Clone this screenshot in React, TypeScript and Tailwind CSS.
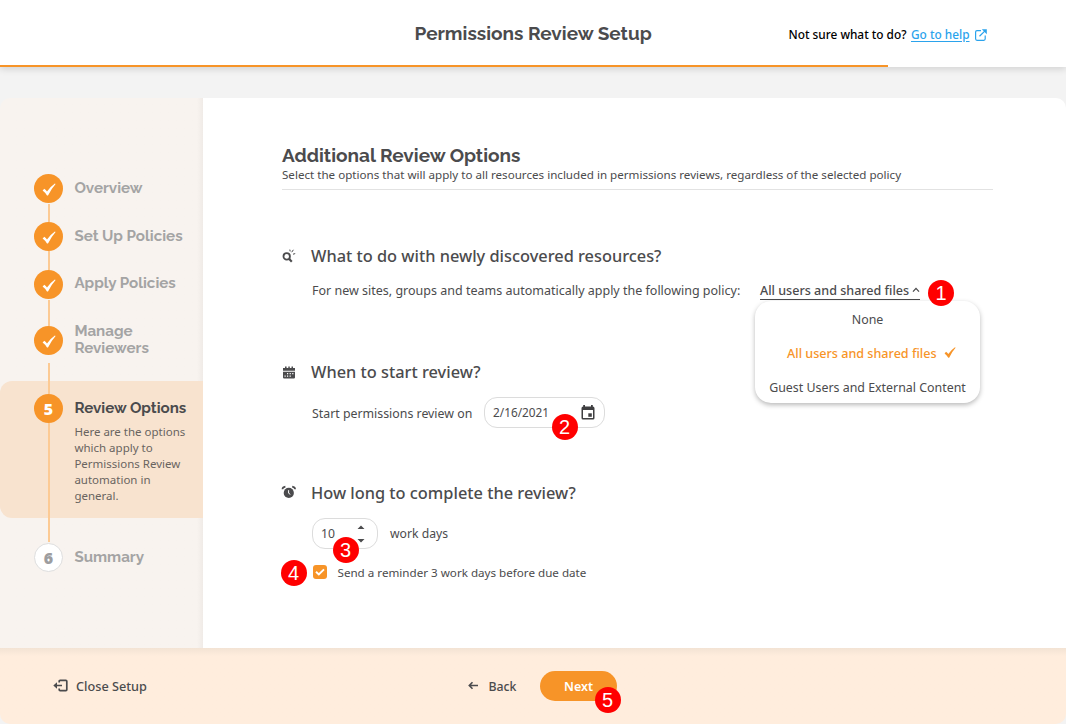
import React from "react";

const Check = ({ className }: { className: string }) => (
  <svg viewBox="0 0 14 13" className={className} fill="currentColor">
    <path d="M0.6 7.6 L2.3 5.7 Q3.9 6.8 5 8.4 Q8.4 3.5 12.9 0.4 L13.6 1 Q9.6 5.4 6 12.6 H5 Q3.3 9.6 0.6 7.6Z" />
  </svg>
);

const Badge = ({ n, className }: { n: number; className: string }) => (
  <span
    className={`absolute z-20 flex h-[26px] w-[26px] items-center justify-center rounded-full bg-[#ff0000] font-['Liberation_Sans',sans-serif] text-[20px] leading-none font-normal text-white ${className}`}
  >
    {n}
  </span>
);

const Dot = () => (
  <span className="flex h-[29px] w-[29px] shrink-0 items-center justify-center rounded-full bg-[#f79428] text-white">
    <Check className="mt-px h-[13px] w-[14px]" />
  </span>
);

const steps = [
  { label: "Overview", height: "h-[48px]", text: "mt-[6px]", line: "mt-px" },
  { label: "Set Up Policies", height: "h-[48px]", text: "mt-[6px]", line: "" },
  { label: "Apply Policies", height: "h-[56px]", text: "mt-[5px]", line: "mt-px" },
  { label: "Manage Reviewers", height: "h-[55px]", text: "-mt-[3px]", line: "mt-[8px]" },
];

function Sidebar() {
  return (
    <nav className="w-[203px] shrink-0 rounded-tl-[10px] bg-gradient-to-r from-[#f8f3ef] from-[97%] to-[#f0ebe7] pt-[76px] font-['Raleway','Inter',sans-serif] text-[15.15px] leading-[17px] font-bold text-[#a4a4a4]">
      {steps.map((s) => (
        <div key={s.label} className={`flex pl-[34px] ${s.height}`}>
          <div className="flex flex-col items-center">
            <Dot />
            <span className={`w-[2px] flex-1 bg-[#fcca94] ${s.line}`} />
          </div>
          <span className={`ml-[11.4px] w-[115px] ${s.text}`}>{s.label}</span>
        </div>
      ))}
      <div className="flex h-[137px] rounded-l-[12px] bg-[#f8e3cf] pl-[34px]">
        <div className="flex flex-col items-center">
          <span className="h-[13px] w-[2px] bg-[#fcca94]" />
          <span className="flex h-[29px] w-[29px] items-center justify-center rounded-full bg-[#f79428] pt-px font-['Noto_Sans',sans-serif] text-[16px] font-black text-white">
            5
          </span>
          <span className="w-[2px] flex-1 bg-[#fcca94]" />
        </div>
        <div className="ml-[11.4px] pt-[19px]">
          <h3 className="text-[#4b4b4d]">Review Options</h3>
          <p className="mt-[7px] w-[118px] font-['Noto_Sans',sans-serif] text-[11.5px] leading-4 font-normal text-[#69645f]">
            Here are the options which apply to Permissions Review automation in general.
          </p>
        </div>
      </div>
      <div className="flex pl-[34px]">
        <div className="flex flex-col items-center">
          <span className="h-[24px] w-[2px] bg-[#fcca94]" />
          <span className="mt-px flex h-[29px] w-[29px] items-center justify-center rounded-full border border-[#dedede] bg-white pt-px font-['Noto_Sans',sans-serif] text-[16px] font-black text-[#9d9d9f]">
            6
          </span>
        </div>
        <span className="mt-[31px] ml-[11.4px]">Summary</span>
      </div>
    </nav>
  );
}

const SearchIcon = () => (
  <svg viewBox="0 0 14 14" className="h-[14px] w-[14px]" fill="none" stroke="#4b4b4d">
    <circle cx="4.7" cy="7.4" r="3.2" strokeWidth="1.8" />
    <path d="M7 9.8 L9.8 12.7" strokeWidth="2.2" />
    <path d="M7.8 0.6 L8.2 2.4 M11.4 0.8 L9.7 3.2 M13.2 4.6 L11 5.2" strokeWidth="1" />
  </svg>
);

const CalendarIcon = () => (
  <svg viewBox="0 0 14 13" className="h-[13px] w-[14px]">
    <path
      fill="#4b4b4d"
      d="M1 2H3V.6h1.6V2h1.7V.6h1.5V2h1.7V.6H11V2h2v2.700H1ZM1 5.700h12v5.900q0 .8-.8.8H1.800Q1 12.400 1 11.600Z"
    />
    <path
      fill="#fff"
      d="M5 7h1.200v1.200h-1.200ZM7.600 7h1.200v1.200h-1.200ZM10.200 7h1.200v1.200h-1.200ZM2.500 9.600h1.200v1.200h-1.200ZM5 9.600h1.200v1.200h-1.200ZM7.600 9.600h1.200v1.200h-1.200Z"
    />
  </svg>
);

const AlarmIcon = () => (
  <svg viewBox="0 0 15 14" className="-ml-px h-[14px] w-[15px] -translate-y-px" fill="none">
    <circle cx="7.8" cy="7.9" r="5.1" fill="#4b4b4d" />
    <path d="M1.400 4.300 Q1.600 2 4.400 1.600 M14.200 4.300 Q14 2 11.200 1.600" stroke="#4b4b4d" strokeWidth="1.6" />
    <path d="M7.6 5.2 V8.2 L9.3 9.4" stroke="#fff" strokeWidth="1" />
  </svg>
);

const Heading = ({ icon, children }: { icon: React.ReactNode; children: React.ReactNode }) => (
  <h2 className="flex h-6 items-center text-[16.35px] leading-6 font-medium text-[#4b4b4d]">
    <span className="flex w-[29px]">{icon}</span>
    {children}
  </h2>
);

function PolicyMenu() {
  return (
    <div className="absolute top-[20px] -left-[5px] z-10 flex h-[102px] w-[225px] flex-col rounded-[16px] bg-white text-center text-[12.4px] leading-[34px] shadow-[0_2px_5px_rgba(0,0,0,0.28)]">
      <div className="h-[34px] pt-[2px]">None</div>
      <div className="flex h-[34px] items-center pt-[4px] pl-[32px] font-medium text-[#f79428]">
        <span className="text-[12.58px]">All users and shared files</span>
        <Check className="-mt-[2px] ml-[7px] h-[11px] w-[12px]" />
      </div>
      <div className="h-[34px] pt-[2px]">Guest Users and External Content</div>
      <Badge n={1} className="-top-[21px] left-[173px]" />
    </div>
  );
}

function Content() {
  return (
    <main className="flex-1 rounded-tr-[10px] bg-white pt-[45px] pr-[73px] pl-[79px] text-[#4b4b4d]">
      <header className="border-b border-[#e2e2e2] pb-[6px]">
        <h1 className="font-['Raleway','Inter',sans-serif] text-[19px] leading-[24px] font-bold">
          Additional Review Options
        </h1>
        <p className="text-[11.61px] leading-4 whitespace-nowrap">
          Select the options that will apply to all resources included in permissions reviews, regardless of the
          selected policy
        </p>
      </header>

      <section className="mt-[54px]">
        <Heading icon={<SearchIcon />}>What to do with newly discovered resources?</Heading>
        <div className="mt-[13px] flex h-[20px] items-center pl-[30px] text-[12.5px] whitespace-nowrap">
          <span className="w-[448px]">For new sites, groups and teams automatically apply the following policy:</span>
          <div className="relative">
            <div className="flex h-[17px] items-center border-b border-[#4b4b4d] pt-[2px] text-[12.55px] font-medium">
              All users and shared files
              <svg
                viewBox="0 0 8 6"
                className="-mt-[3px] ml-[3px] h-[6px] w-[8px]"
                fill="none"
                stroke="currentColor"
                strokeWidth="1.3"
              >
                <path d="M1 4.6 L4 1.4 L7 4.6" />
              </svg>
            </div>
            <div className="absolute -top-[2px] left-0">
              <PolicyMenu />
            </div>
          </div>
        </div>
      </section>

      <section className="mt-[59px]">
        <Heading icon={<CalendarIcon />}>When to start review?</Heading>
        <div className="mt-[13px] flex h-[31px] items-center pl-[30px] text-[12.35px]">
          <span className="w-[172px] pt-[3px]">Start permissions review on</span>
          <div className="relative flex h-[31px] w-[121px] items-center justify-between rounded-[13px] border border-[#dcdcdc] pr-[9px] pl-[8px] text-[11.8px]">
            2/16/2021
            <svg viewBox="0 0 14 15" className="h-[15px] w-[14px]">
              <path
                fill="#3f3f41"
                fillRule="evenodd"
                d="M2.2 0H4v1.5h6V0h1.8v1.5q1.7 0 1.7 1.7v9.8q0 1.5-1.5 1.5H2Q.5 14.5.5 13V3.2q0-1.7 1.7-1.7ZM2 5v8h10V5Z"
              />
              <path fill="#3f3f41" d="M7.3 8.3h3.5v3.5H7.3Z" />
            </svg>
            <Badge n={2} className="top-[16px] left-[66.5px]" />
          </div>
        </div>
      </section>

      <section className="mt-[53px]">
        <Heading icon={<AlarmIcon />}>How long to complete the review?</Heading>
        <div className="mt-[13px] flex h-[31px] items-center pl-[30px] text-[12.2px]">
          <div className="relative mr-[12px] flex h-[31px] w-[66px] items-center justify-between rounded-[13px] border border-[#dcdcdc] pt-px pr-[12px] pl-[8px]">
            10
            <svg viewBox="0 0 8 18" className="h-[18px] w-[8px]" fill="#4b4b4d">
              <path d="M0.5 4 L4 0.5 L7.5 4ZM0.5 14 L4 17.5 L7.5 14Z" />
            </svg>
            <Badge n={3} className="top-[18px] left-[19.5px]" />
          </div>
          <span className="pt-[2px]">work days</span>
        </div>
        <div className="relative mt-[13px] flex h-[20px] items-center pl-[30.5px] text-[11.63px]">
          <Badge n={4} className="-top-[2.5px] -left-[1.5px]" />
          <span className="mr-[11px] -mt-px flex h-[14px] w-[14px] items-center justify-center rounded-[3px] bg-[#f79428]">
            <svg viewBox="0 0 10 8" className="h-[8px] w-[10px]" fill="none" stroke="#fff" strokeWidth="1.9">
              <path d="M1 3.8 L3.8 6.5 L9 1.3" />
            </svg>
          </span>
          <span className="pt-[2px]">Send a reminder 3 work days before due date</span>
        </div>
      </section>
    </main>
  );
}

export default function App() {
  return (
    <div className="flex h-[724px] w-[1066px] flex-col overflow-hidden bg-[#f3f3f3] font-['Noto_Sans',sans-serif]">
      <header className="h-[67px] bg-white shadow-[0_2px_7px_rgba(0,0,0,0.14)]">
        <div className="flex h-[65px] items-center">
          <h1 className="ml-[414.5px] w-[374px] pt-px font-['Raleway','Inter',sans-serif] text-[19px] font-bold text-[#4b4b4d]">
            Permissions Review Setup
          </h1>
          <div className="flex items-center pt-[5px] text-[11.85px] font-medium whitespace-nowrap text-black">
            Not sure what to do?
            <a className="ml-[4.5px] text-[#2ba3ec] underline underline-offset-2">Go to help</a>
            <svg
              viewBox="0 0 12 12"
              className="ml-[5px] h-[12px] w-[12px]"
              fill="none"
              stroke="#2ba3ec"
              strokeWidth="1.2"
            >
              <path d="M6 1.6 H2 Q.6 1.6 .6 3 V9.8 Q.6 11.3 2 11.3 H8.8 Q10.2 11.3 10.2 9.8 V6.5 M4.5 7.3 L10 1.9" />
              <path d="M6.8 .2 H11.8 V5.2Z" fill="#2ba3ec" stroke="none" />
            </svg>
          </div>
        </div>
        <div className="h-[2px] w-[888px] bg-[#f79428]" />
      </header>

      <div className="mt-[31px] flex h-[550px]">
        <Sidebar />
        <Content />
      </div>

      <footer className="flex h-[76px] items-center rounded-b-[10px] bg-gradient-to-b from-[#f3e3d4] to-[#ffeddd] to-[8px] pl-[53px] font-medium text-[#4b4b4d]">
        <button className="flex w-[414px] items-center text-[12.7px]">
          <svg
            viewBox="0 0 15 13"
            className="mr-[8px] h-[13px] w-[15px]"
            fill="none"
            stroke="currentColor"
            strokeWidth="1.7"
          >
            <path d="M6.2 3.5 V2.2 Q6.2 1.3 7.1 1.3 H12.9 Q13.8 1.3 13.8 2.2 V10.8 Q13.8 11.7 12.9 11.7 H7.1 Q6.2 11.7 6.2 10.8 V9.5 M2 6.5 H9" />
            <path d="M0.3 6.5 L4 3.3 V9.7Z" fill="currentColor" stroke="none" />
          </svg>
          <span className="pt-[2px]">Close Setup</span>
        </button>
        <button className="flex w-[73px] items-center text-[12.3px]">
          <svg
            viewBox="0 0 11 9"
            className="mr-[9.5px] ml-px h-[9px] w-[11px] -translate-y-px"
            fill="none"
            stroke="currentColor"
            strokeWidth="1.6"
          >
            <path d="M10 4.5 H1.5 M4.5 1.2 L1.3 4.5 L4.5 7.8" />
          </svg>
          <span className="pt-[2px]">Back</span>
        </button>
        <button className="relative h-[30px] w-[77px] rounded-full bg-[#f79428] pt-[2px] text-[12.5px] font-semibold text-white">
          Next
          <Badge n={5} className="top-[16px] left-[54.5px]" />
        </button>
      </footer>
    </div>
  );
}
